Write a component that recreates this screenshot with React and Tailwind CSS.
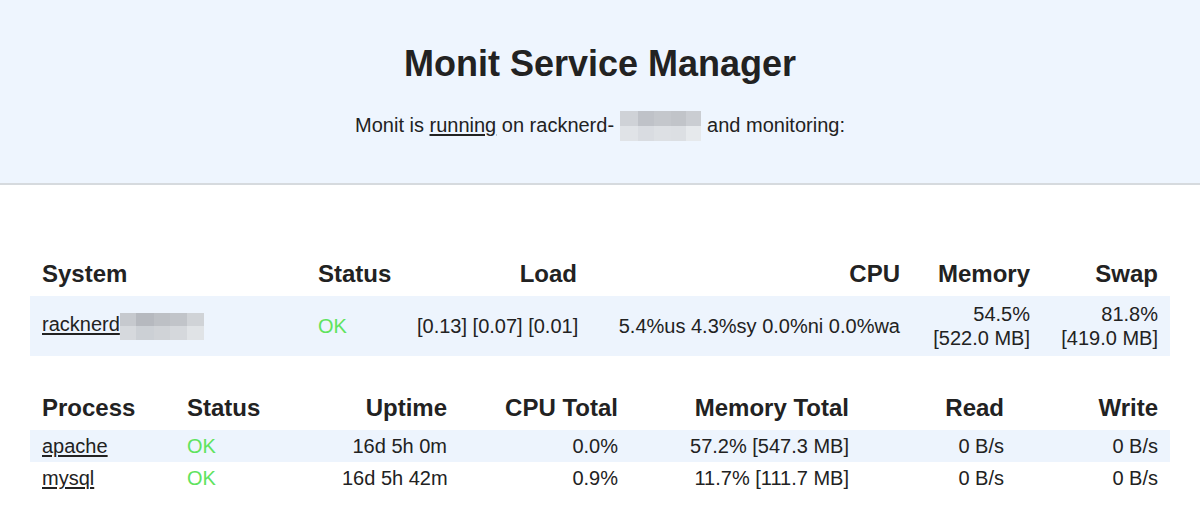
import React from "react";

// pixelated redaction, like the censored hostname in the screenshot
const Redacted = ({ cells, rows, className = "" }) => (
  <span className={`inline-flex flex-col align-middle ${className}`}>
    {rows.map((row, i) => (
      <span key={i} className="flex flex-1">
        {row.map((c, j) => (
          <span key={j} style={{ background: c, width: cells[j] }} className="block" />
        ))}
      </span>
    ))}
  </span>
);

const SYSTEM_COLS = [
  { h: "System", w: "w-[276px]", align: "text-left" },
  { h: "Status", w: "w-[99px]", align: "text-left" },
  { h: "Load", w: "w-[184px]", align: "text-right" },
  { h: "CPU", w: "w-[323px]", align: "text-right" },
  { h: "Memory", w: "w-[130px]", align: "text-right" },
  { h: "Swap", w: "w-[128px]", align: "text-right" },
];

const PROCESS_COLS = [
  { h: "Process", w: "w-[145px]", align: "text-left" },
  { h: "Status", w: "w-[155px]", align: "text-left" },
  { h: "Uptime", w: "w-[129px]", align: "text-right" },
  { h: "CPU Total", w: "w-[171px]", align: "text-right" },
  { h: "Memory Total", w: "w-[231px]", align: "text-right" },
  { h: "Read", w: "w-[155px]", align: "text-right" },
  { h: "Write", w: "w-[154px]", align: "text-right" },
];

const processes = [
  { name: "apache", status: "OK", uptime: "16d 5h 0m", cpu: "0.0%", mem: "57.2% [547.3 MB]", read: "0 B/s", write: "0 B/s", stripe: true },
  { name: "mysql", status: "OK", uptime: "16d 5h 42m", cpu: "0.9%", mem: "11.7% [111.7 MB]", read: "0 B/s", write: "0 B/s", stripe: false },
];

const Head = ({ cols }) => (
  <thead>
    <tr>
      {cols.map((c) => (
        <th key={c.h} className={`${c.w} ${c.align} px-3 pt-1 pb-2 text-[24px] leading-[28px] font-bold`}>
          {c.h}
        </th>
      ))}
    </tr>
  </thead>
);

export default function App() {
  return (
    <div className="min-h-[525px] bg-white text-[#222] text-[20px] leading-[24px]" style={{ fontFamily: '"Liberation Sans", Arial, Helvetica, sans-serif' }}>
      {/* ── Header ── */}
      <div className="bg-[#eef5fe] border-b-2 border-[#d6dade] pt-[43px] pb-[42px] text-center">
        <h1 className="text-[36px] leading-[42px] font-bold">Monit Service Manager</h1>
        <p className="mt-[28px]">
          Monit is <span className="underline underline-offset-2">running</span> on racknerd-
          <Redacted
            className="h-[30px] w-[81px] mx-[6px] -mt-[2px]"
            cells={["18px", "16px", "17px", "15px", "15px"]}
            rows={[
              ["#cfd2d7", "#bfc2c8", "#c4c7cc", "#c1c4c9", "#cacdd2"],
              ["#e0e3e7", "#d9dce1", "#dde0e4", "#dcdfe3", "#e6e9ec"],
            ]}
          />
          and monitoring:
        </p>
      </div>

      {/* ── System ── */}
      <div className="px-[30px] pt-[71px]">
        <table className="table-fixed w-full border-collapse">
          <Head cols={SYSTEM_COLS} />
          <tbody>
            <tr className="bg-[#edf4fd]">
              <td className="px-3 py-[6px] align-middle whitespace-nowrap">
                <span className="underline underline-offset-2">racknerd</span>
                <Redacted
                  className="h-[27px] w-[84px]"
                  cells={["16px", "18px", "16px", "17px", "17px"]}
                  rows={[
                    ["#c6c9ce", "#b6b9bf", "#bdc0c5", "#c1c4c9", "#d0d3d7"],
                    ["#d6d9dd", "#ccd0d5", "#d0d3d7", "#d5d8dc", "#e0e3e6"],
                  ]}
                />
              </td>
              <td className="px-3 py-[6px] text-[#5fe35f]">OK</td>
              <td className="px-3 py-[6px] text-right whitespace-nowrap">[0.13] [0.07] [0.01]</td>
              <td className="px-3 py-[6px] text-right whitespace-nowrap">5.4%us 4.3%sy 0.0%ni 0.0%wa</td>
              <td className="px-3 py-[6px] text-right whitespace-nowrap">54.5%<br />[522.0 MB]</td>
              <td className="px-3 py-[6px] text-right whitespace-nowrap">81.8%<br />[419.0 MB]</td>
            </tr>
          </tbody>
        </table>

        {/* ── Processes ── */}
        <table className="table-fixed w-full border-collapse mt-[34px]">
          <Head cols={PROCESS_COLS} />
          <tbody>
            {processes.map((p) => (
              <tr key={p.name} className={p.stripe ? "bg-[#edf4fd]" : ""}>
                <td className="px-3 py-1"><span className="underline underline-offset-2">{p.name}</span></td>
                <td className="px-3 py-1 text-[#5fe35f]">{p.status}</td>
                <td className="px-3 py-1 text-right whitespace-nowrap">{p.uptime}</td>
                <td className="px-3 py-1 text-right">{p.cpu}</td>
                <td className="px-3 py-1 text-right whitespace-nowrap">{p.mem}</td>
                <td className="px-3 py-1 text-right">{p.read}</td>
                <td className="px-3 py-1 text-right">{p.write}</td>
              </tr>
            ))}
          </tbody>
        </table>
      </div>
    </div>
  );
}
